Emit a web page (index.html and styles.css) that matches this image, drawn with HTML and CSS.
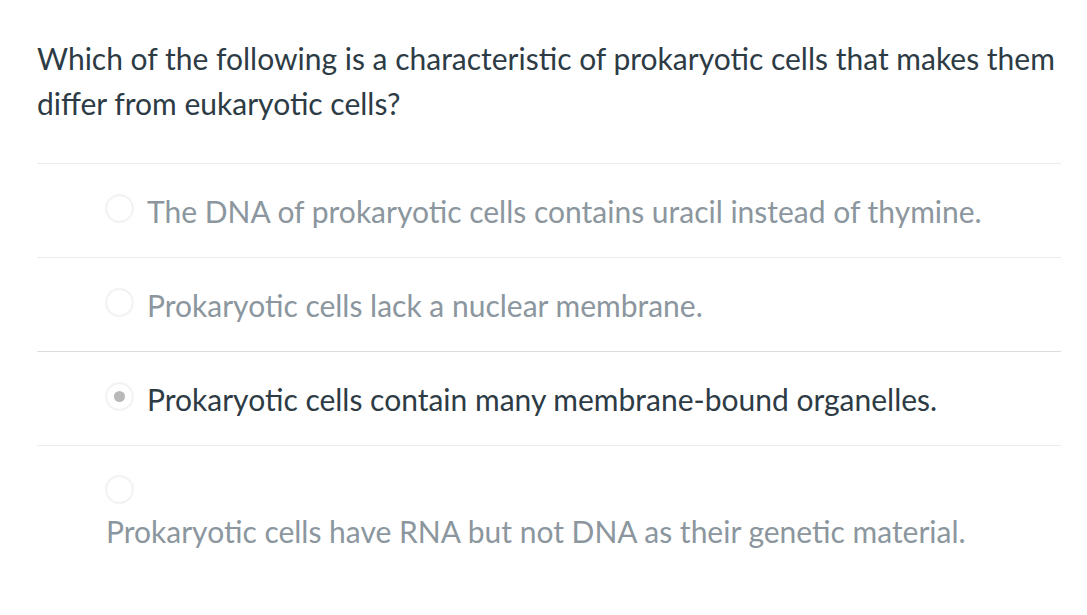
FILE: index.html
```html
<!DOCTYPE html>
<html>
<head>
<meta charset="utf-8">
<link rel="stylesheet" href="styles.css">
</head>
<body>
<div class="question">
  <div class="question-text">Which of the following is a characteristic of prokaryotic cells that makes them differ from eukaryotic cells?</div>
  <div class="answers">
    <div class="answer">
      <span class="radio"></span>
      <span class="label muted">The DNA of prokaryotic cells contains uracil instead of thymine.</span>
    </div>
    <div class="answer">
      <span class="radio"></span>
      <span class="label muted">Prokaryotic cells lack a nuclear membrane.</span>
    </div>
    <div class="answer darker">
      <span class="radio checked"></span>
      <span class="label">Prokaryotic cells contain many membrane-bound organelles.</span>
    </div>
    <div class="answer stacked">
      <span class="radio"></span>
      <span class="label muted">Prokaryotic cells have RNA but not DNA as their genetic material.</span>
    </div>
  </div>
</div>
</body>
</html>
```

FILE: styles.css
```css
html, body {
  margin: 0;
  padding: 0;
  background: #ffffff;
}
body {
  font-family: Lato, "Open Sans", sans-serif;
  color: #2d3b45;
}
.question {
  padding: 36px 26px 0 37px;
  width: 1024px;
}
.question-text {
  font-size: 30px;
  line-height: 45px;
  padding-bottom: 37px;
}
.answers {
  display: flex;
  flex-direction: column;
}
.answer {
  height: 93px;
  border-top: 1px solid #ebebeb;
  display: flex;
  align-items: center;
  padding-left: 69px;
  gap: 14px;
}
.answer.darker {
  border-top-color: #dcdcdc;
}
.answer.stacked {
  flex-direction: column;
  align-items: flex-start;
  gap: 10px;
  padding-top: 30px;
  height: auto;
}
.radio {
  width: 25px;
  height: 25px;
  border-radius: 50%;
  border: 1px solid #f0f0f0;
  box-shadow: 0 0 1px 1px #f4f4f4;
  background: #ffffff;
  display: flex;
  align-items: center;
  justify-content: center;
  flex: none;
  margin-top: -4px;
}
.answer.stacked .radio {
  margin-top: 0;
}
.radio.checked::after {
  content: "";
  width: 11px;
  height: 11px;
  border-radius: 50%;
  background: #b9b9b9;
}
.label {
  font-size: 30px;
  line-height: 36px;
}
.label.muted {
  color: #8b969e;
}
```
